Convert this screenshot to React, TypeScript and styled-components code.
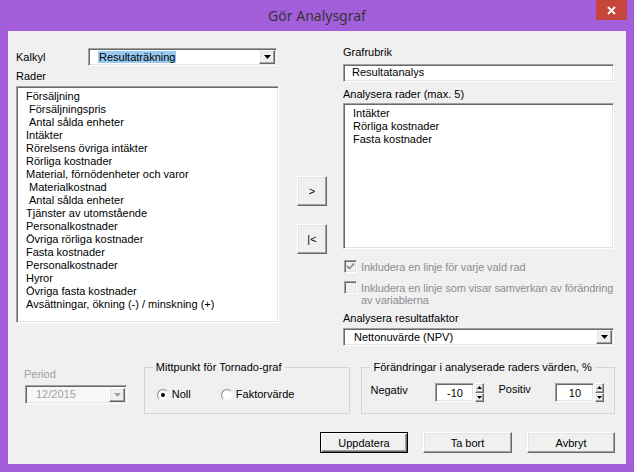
import styled, { createGlobalStyle, css } from 'styled-components';

const GlobalStyle = createGlobalStyle`
  html, body {
    margin: 0;
    padding: 0;
  }
  body {
    font-family: "Liberation Sans", Arial, sans-serif;
    font-size: 11px;
    color: #000;
  }
`;

const sunken = css`
  box-sizing: border-box;
  border: 1px solid;
  border-color: #a0a0a0 #ffffff #ffffff #a0a0a0;
  box-shadow: inset 1px 1px 0 #696969, inset -1px -1px 0 #e3e3e3;
`;

const raised = css`
  box-sizing: border-box;
  border: 1px solid;
  border-color: #ffffff #696969 #696969 #ffffff;
  box-shadow: inset -1px -1px 0 #a0a0a0, inset 1px 1px 0 #e3e3e3;
  background: #f0f0f0;
`;

const Window = styled.div`
  width: 634px;
  height: 472px;
  background: #a35fdb;
  display: flex;
  flex-direction: column;
`;

const TitleBar = styled.div`
  position: relative;
  height: 31px;
  flex: none;
  display: flex;
  align-items: center;
  justify-content: center;
`;

const Title = styled.span`
  font-family: "Noto Sans", "Open Sans", sans-serif;
  font-size: 14px;
  color: #333;
  margin-top: -1px;
`;

const CloseButton = styled.button`
  position: absolute;
  top: 0;
  right: 7px;
  width: 31px;
  height: 20px;
  padding: 0;
  border: none;
  background: #c7463b;
  display: flex;
  align-items: center;
  justify-content: center;
`;

const Client = styled.div`
  flex: 1;
  margin: 0 8px 8px;
  background: #f0f0f0;
  padding: 15px 11px 0 8px;
  display: flex;
  flex-direction: column;
`;

const TopSection = styled.div`
  display: flex;
  align-items: flex-start;
`;

const LeftCol = styled.div`
  width: 263px;
  display: flex;
  flex-direction: column;
`;

const MidCol = styled.div`
  width: 30px;
  margin-left: 18px;
  padding-top: 130px;
  display: flex;
  flex-direction: column;
  gap: 18px;
`;

const RightCol = styled.div`
  width: 271px;
  margin-left: 16px;
  display: flex;
  flex-direction: column;
`;

const FormRow = styled.div`
  display: flex;
  align-items: center;
  margin-top: 2px;
`;

const Label = styled.div<{ $width?: number; $top?: number; $disabled?: boolean }>`
  line-height: 13px;
  width: ${p => (p.$width ? `${p.$width}px` : 'auto')};
  margin-top: ${p => p.$top ?? 0}px;
  flex: none;
  color: ${p => (p.$disabled ? '#a0a0a0' : '#000')};
`;

const ComboBox = styled.div<{ $width: number; $top?: number; $disabled?: boolean }>`
  ${sunken};
  width: ${p => p.$width}px;
  height: 18px;
  margin-top: ${p => p.$top ?? 0}px;
  flex: none;
  display: flex;
  align-items: center;
  background: ${p => (p.$disabled ? '#f7f7f7' : '#fff')};
  color: ${p => (p.$disabled ? '#a0a0a0' : '#000')};
`;

const ComboText = styled.div<{ $indent: number }>`
  flex: 1;
  padding-left: ${p => p.$indent}px;
  white-space: nowrap;
  overflow: hidden;
  line-height: 13px;
`;

const Selected = styled.span`
  background: #99c9ef;
  padding: 0 1px;
`;

const DropButton = styled.div`
  ${raised};
  width: 16px;
  height: 14px;
  margin-right: 1px;
  flex: none;
  display: flex;
  align-items: center;
  justify-content: center;
`;

const TextBox = styled.div<{ $top?: number }>`
  ${sunken};
  height: 18px;
  margin-top: ${p => p.$top ?? 0}px;
  background: #fff;
  padding-left: 8px;
  line-height: 15px;
`;

const ListBox = styled.div<{ $height: number; $top: number }>`
  ${sunken};
  height: ${p => p.$height}px;
  margin-top: ${p => p.$top}px;
  background: #fff;
  padding: 3px 0 0 9px;
`;

const ListItem = styled.div<{ $indent?: boolean }>`
  line-height: 13px;
  padding-left: ${p => (p.$indent ? 3 : 0)}px;
  white-space: nowrap;
`;

const MoveButton = styled.button`
  ${raised};
  width: 30px;
  height: 30px;
  padding: 0;
  font-family: inherit;
  font-size: 11px;
  color: #000;
`;

const CheckRow = styled.div<{ $top: number }>`
  display: flex;
  align-items: flex-start;
  margin-top: ${p => p.$top}px;
  color: #8d8d8d;
`;

const CheckBox = styled.span`
  ${sunken};
  width: 13px;
  height: 13px;
  flex: none;
  margin: 0 4px 0 1px;
  background: #f0f0f0;
  display: flex;
  align-items: center;
  justify-content: center;
`;

const CheckText = styled.div`
  line-height: 12px;
  padding-top: 1px;
  white-space: nowrap;
  letter-spacing: -0.1px;
`;

const BottomRow = styled.div`
  display: flex;
  align-items: flex-start;
  margin-top: 15px;
`;

const PeriodBlock = styled.div`
  width: 120px;
  padding: 7px 0 0 8px;
  display: flex;
  flex-direction: column;
`;

const PeriodCombo = styled(ComboBox)`
  margin: 4px 0 0 1px;
  height: 19px;
`;

const Group = styled.fieldset<{ $width: number; $gap?: number }>`
  box-sizing: border-box;
  width: ${p => p.$width}px;
  height: 53px;
  margin: 0 0 0 ${p => p.$gap ?? 0}px;
  padding: 0;
  border: 1px solid #d5d5d5;
  border-radius: 0;
  min-width: 0;
`;

const Legend = styled.legend`
  margin-left: 8px;
  padding: 0 3px;
  line-height: 13px;
  font-size: 11px;
`;

const RadioRow = styled.div`
  display: flex;
  align-items: center;
  padding: 14px 0 0 12px;
`;

const RadioOption = styled.label<{ $width?: number }>`
  display: flex;
  align-items: center;
  gap: 3px;
  line-height: 13px;
  width: ${p => (p.$width ? `${p.$width}px` : 'auto')};
`;

const RadioCircle = styled.span<{ $checked?: boolean }>`
  box-sizing: border-box;
  width: 12px;
  height: 12px;
  border-radius: 50%;
  border: 1px solid;
  border-color: #8a8a8a #f4f4f4 #f4f4f4 #8a8a8a;
  background: #fff;
  display: inline-flex;
  align-items: center;
  justify-content: center;
  &::after {
    content: '';
    width: 4px;
    height: 4px;
    border-radius: 50%;
    background: #000;
    display: ${p => (p.$checked ? 'block' : 'none')};
  }
`;

const SpinRow = styled.div`
  display: flex;
  align-items: flex-start;
  padding: 9px 0 0 8px;
`;

const SpinBox = styled.div<{ $gap?: number }>`
  display: flex;
  height: 19px;
  margin-right: ${p => p.$gap ?? 0}px;
`;

const SpinText = styled.div`
  ${sunken};
  width: 39px;
  height: 19px;
  background: #fff;
  text-align: center;
  line-height: 17px;
  padding-top: 1px;
`;

const SpinButtons = styled.div`
  display: flex;
  flex-direction: column;
  width: 9px;
  margin-left: 1px;
`;

const SpinButton = styled.div`
  ${raised};
  flex: 1;
  display: flex;
  align-items: center;
  justify-content: center;
`;

const ButtonRow = styled.div`
  display: flex;
  justify-content: flex-end;
  gap: 15px;
  margin-top: 18px;
`;

const DialogButton = styled.button<{ $default?: boolean; $width: number }>`
  ${raised};
  width: ${p => p.$width}px;
  height: 21px;
  padding: 0;
  font-family: inherit;
  font-size: 11px;
  color: #000;
  ${p =>
    p.$default &&
    css`
      border: 1px solid #000;
      box-shadow: inset 1px 1px 0 #fff, inset -1px -1px 0 #696969, inset -2px -2px 0 #a0a0a0;
    `}
`;

const Arrow = ({ up, color = '#000' }: { up?: boolean; color?: string }) => (
  <svg width="7" height="4" viewBox="0 0 7 4">
    <path d={up ? 'M0 4 L3.5 0 L7 4 Z' : 'M0 0 L7 0 L3.5 4 Z'} fill={color} />
  </svg>
);

const SmallArrow = ({ up }: { up?: boolean }) => (
  <svg width="5" height="3" viewBox="0 0 5 3">
    <path d={up ? 'M0 3 L2.5 0 L5 3 Z' : 'M0 0 L5 0 L2.5 3 Z'} fill="#000" />
  </svg>
);

const Spinner = ({ value, gap }: { value: string; gap?: number }) => (
  <SpinBox $gap={gap}>
    <SpinText>{value}</SpinText>
    <SpinButtons>
      <SpinButton>
        <SmallArrow up />
      </SpinButton>
      <SpinButton>
        <SmallArrow />
      </SpinButton>
    </SpinButtons>
  </SpinBox>
);

const rows: { text: string; indent?: boolean }[] = [
  { text: 'Försäljning' },
  { text: 'Försäljningspris', indent: true },
  { text: 'Antal sålda enheter', indent: true },
  { text: 'Intäkter' },
  { text: 'Rörelsens övriga intäkter' },
  { text: 'Rörliga kostnader' },
  { text: 'Material, förnödenheter och varor' },
  { text: 'Materialkostnad', indent: true },
  { text: 'Antal sålda enheter', indent: true },
  { text: 'Tjänster av utomstående' },
  { text: 'Personalkostnader' },
  { text: 'Övriga rörliga kostnader' },
  { text: 'Fasta kostnader' },
  { text: 'Personalkostnader' },
  { text: 'Hyror' },
  { text: 'Övriga fasta kostnader' },
  { text: 'Avsättningar, ökning (-) / minskning (+)' },
];

const selectedRows = ['Intäkter', 'Rörliga kostnader', 'Fasta kostnader'];

export default function App() {
  return (
    <>
      <GlobalStyle />
      <Window>
        <TitleBar>
          <Title>Gör Analysgraf</Title>
          <CloseButton aria-label="Stäng">
            <svg width="9" height="9" viewBox="0 0 9 9">
              <path d="M1 1 L8 8 M8 1 L1 8" stroke="#fff" strokeWidth="1.8" />
            </svg>
          </CloseButton>
        </TitleBar>
        <Client>
          <TopSection>
            <LeftCol>
              <FormRow>
                <Label $width={72}>Kalkyl</Label>
                <ComboBox $width={189}>
                  <ComboText $indent={9}>
                    <Selected>Resultaträkning</Selected>
                  </ComboText>
                  <DropButton>
                    <Arrow />
                  </DropButton>
                </ComboBox>
              </FormRow>
              <Label $top={4}>Rader</Label>
              <ListBox $height={237} $top={3}>
                {rows.map((r, i) => (
                  <ListItem key={i} $indent={r.indent}>
                    {r.text}
                  </ListItem>
                ))}
              </ListBox>
            </LeftCol>
            <MidCol>
              <MoveButton>&gt;</MoveButton>
              <MoveButton>|&lt;</MoveButton>
            </MidCol>
            <RightCol>
              <Label>Grafrubrik</Label>
              <TextBox $top={5}>Resultatanalys</TextBox>
              <Label $top={6}>Analysera rader (max. 5)</Label>
              <ListBox $height={146} $top={2}>
                {selectedRows.map(r => (
                  <ListItem key={r}>{r}</ListItem>
                ))}
              </ListBox>
              <CheckRow $top={11}>
                <CheckBox>
                  <svg width="9" height="9" viewBox="0 0 9 9">
                    <path d="M1 4 L3.5 6.5 L8 1.5" stroke="#8d8d8d" strokeWidth="1.8" fill="none" />
                  </svg>
                </CheckBox>
                <CheckText>Inkludera en linje för varje vald rad</CheckText>
              </CheckRow>
              <CheckRow $top={8}>
                <CheckBox />
                <CheckText>
                  Inkludera en linje som visar samverkan av förändring
                  <br />
                  av variablerna
                </CheckText>
              </CheckRow>
              <Label $top={6}>Analysera resultatfaktor</Label>
              <ComboBox $width={271} $top={3}>
                <ComboText $indent={10}>Nettonuvärde (NPV)</ComboText>
                <DropButton>
                  <Arrow />
                </DropButton>
              </ComboBox>
            </RightCol>
          </TopSection>
          <BottomRow>
            <PeriodBlock>
              <Label $disabled>Period</Label>
              <PeriodCombo $width={102} $disabled>
                <ComboText $indent={10}>12/2015</ComboText>
                <DropButton>
                  <Arrow color="#a0a0a0" />
                </DropButton>
              </PeriodCombo>
            </PeriodBlock>
            <Group $width={207}>
              <Legend>Mittpunkt för Tornado-graf</Legend>
              <RadioRow>
                <RadioOption $width={64}>
                  <RadioCircle $checked />
                  Noll
                </RadioOption>
                <RadioOption>
                  <RadioCircle />
                  Faktorvärde
                </RadioOption>
              </RadioRow>
            </Group>
            <Group $width={254} $gap={11}>
              <Legend>Förändringar i analyserade raders värden, %</Legend>
              <SpinRow>
                <Label $width={65} $top={1}>Negativ</Label>
                <Spinner value="-10" gap={14} />
                <Label $width={57}>Positiv</Label>
                <Spinner value="10" />
              </SpinRow>
            </Group>
          </BottomRow>
          <ButtonRow>
            <DialogButton $default $width={88}>Uppdatera</DialogButton>
            <DialogButton $width={89}>Ta bort</DialogButton>
            <DialogButton $width={88}>Avbryt</DialogButton>
          </ButtonRow>
        </Client>
      </Window>
    </>
  );
}
